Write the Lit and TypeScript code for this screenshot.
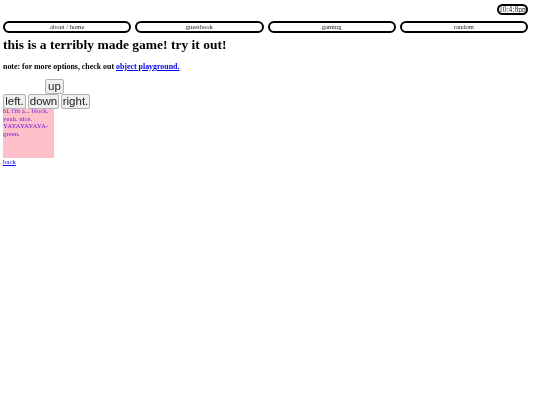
import { LitElement, html, css } from "lit";
import { customElement } from "lit/decorators.js";

@customElement("app-root")
export class AppRoot extends LitElement {
  static styles = css`
    :host { display: block; font-family: "Liberation Serif", serif; color: #000; padding: 4px 12px 0 3px; height: 401px; box-sizing: content-box; width: 525px; background: #fff; filter: blur(0.3px); }
    .top { display: flex; justify-content: flex-end; height: 17px; }
    .clock { width: 31px; height: 11px; box-sizing: border-box; border: 2px solid #000; border-radius: 6px; font-size: 7.5px; line-height: 7px; text-align: center; white-space: nowrap; overflow: hidden; color: #222; }
    nav { display: grid; grid-template-columns: repeat(4, 1fr); gap: 4px; height: 12px; }
    nav a { box-sizing: border-box; border: 2px solid #000; border-radius: 6px; font-size: 6.6px; line-height: 7px; text-align: center; color: #222; text-decoration: none; }
    h1 { margin: 3px 0 0; font-size: 13.5px; line-height: 17px; font-weight: bold; }
    .note { margin: 9px 0 0; font-size: 7.9px; line-height: 10px; font-weight: bold; }
    .note a { color: #00e; text-decoration: underline; }
    .controls { margin-top: 7px; display: flex; flex-direction: column; }
    .row { display: flex; gap: 2px; height: 14.5px; }
    .up { margin-left: 42px; }
    button { box-sizing: border-box; height: 15px; padding: 0; font-family: "Liberation Sans", sans-serif; font-size: 11.5px; line-height: 13px; color: #222; background: #efefef; border: 1px solid #b0b0b0; border-radius: 2px; }
    .b-up { width: 19px; }
    .b-left { width: 23px; }
    .b-down { width: 31px; }
    .b-right { width: 29px; }
    .block { width: 51px; height: 50px; box-sizing: border-box; background: pink; color: #6a20e0; font-size: 6.8px; line-height: 7.6px; display: flow-root; }
    .block p { margin: -1px 0 0; }
    .back { display: block; width: max-content; font-size: 6.8px; line-height: 8px; color: #00e; text-decoration: underline; }
  `;

  render() {
    return html`
      <div class="top"><div class="clock">10:4:8pm</div></div>
      <nav>
        <a href="#">about / home</a>
        <a href="#">guestbook</a>
        <a href="#">gaming</a>
        <a href="#">random</a>
      </nav>
      <h1>this is a terribly made game! try it out!</h1>
      <p class="note">note: for more options, check out <a href="#">object playground.</a></p>
      <div class="controls">
        <div class="row up"><button class="b-up">up</button></div>
        <div class="row">
          <button class="b-left">left.</button>
          <button class="b-down">down</button>
          <button class="b-right">right.</button>
        </div>
      </div>
      <div class="block"><p>hi, i'm a... block.<br />yeah. nice.<br />YAYAYAYAYA-<br />green.</p></div>
      <a class="back" href="#">back</a>
    `;
  }
}
